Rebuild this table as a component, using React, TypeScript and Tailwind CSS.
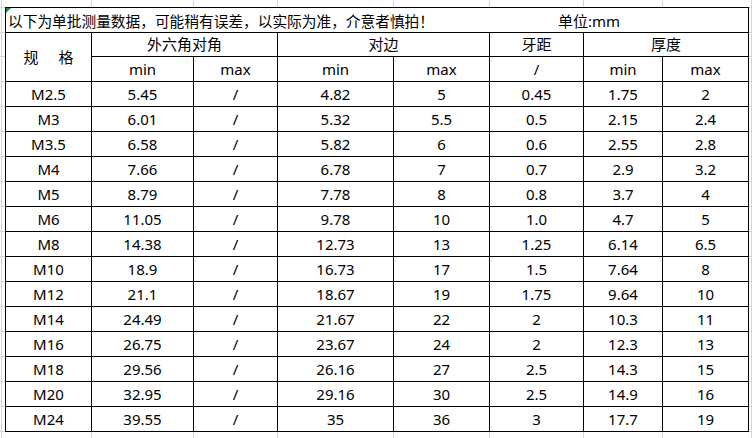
import React from "react";

const rows: string[][] = [
  ["M2.5", "5.45", "/", "4.82", "5", "0.45", "1.75", "2"],
  ["M3", "6.01", "/", "5.32", "5.5", "0.5", "2.15", "2.4"],
  ["M3.5", "6.58", "/", "5.82", "6", "0.6", "2.55", "2.8"],
  ["M4", "7.66", "/", "6.78", "7", "0.7", "2.9", "3.2"],
  ["M5", "8.79", "/", "7.78", "8", "0.8", "3.7", "4"],
  ["M6", "11.05", "/", "9.78", "10", "1.0", "4.7", "5"],
  ["M8", "14.38", "/", "12.73", "13", "1.25", "6.14", "6.5"],
  ["M10", "18.9", "/", "16.73", "17", "1.5", "7.64", "8"],
  ["M12", "21.1", "/", "18.67", "19", "1.75", "9.64", "10"],
  ["M14", "24.49", "/", "21.67", "22", "2", "10.3", "11"],
  ["M16", "26.75", "/", "23.67", "24", "2", "12.3", "13"],
  ["M18", "29.56", "/", "26.16", "27", "2.5", "14.3", "15"],
  ["M20", "32.95", "/", "29.16", "30", "2.5", "14.9", "16"],
  ["M24", "39.55", "/", "35", "36", "3", "17.7", "19"],
];

const colEdges = [1.5, 91.5, 193.5, 277.5, 393.5, 489.5, 583.5, 662.5, 751.5];
const rowEdges = [7.5, 32.5, 56.5, ...Array.from({ length: 15 }, (_, i) => 81.5 + i * 25)];

const Cell = ({ children, className = "" }: { children?: React.ReactNode; className?: string }) => (
  <div className={`flex items-center justify-center border-r border-b border-black ${className}`}>{children}</div>
);

const App = () => {
  return (
    <div
      className="relative w-[752px] h-[438px] overflow-hidden bg-white pl-[5px] pt-[7px] text-[15px] text-black"
      style={{ fontFamily: '"Noto Sans", "Noto Sans CJK SC", sans-serif' }}
    >
      {/* spreadsheet gridlines behind the table */}
      <svg className="absolute inset-0 pointer-events-none" width="752" height="438">
        {colEdges.map((x) => (
          <line key={`v${x}`} x1={x} y1={0} x2={x} y2={438} stroke="#d6d6d6" strokeWidth={1} />
        ))}
        {rowEdges.map((y) => (
          <line key={`h${y}`} x1={0} y1={y} x2={752} y2={y} stroke="#d6d6d6" strokeWidth={1} />
        ))}
      </svg>

      <div className="relative grid w-max grid-cols-[86px_102px_84px_116px_96px_94px_79px_86px] grid-rows-[25px_24px_25px_repeat(14,25px)] border-l border-t border-black bg-white leading-none">
        {/* title row */}
        <div className="relative col-span-8 flex items-center border-r border-b border-black pl-[2px] pt-[2px]">
          <span className="absolute left-0 top-0 h-0 w-0 border-t-[5px] border-r-[5px] border-t-[#1f8a3c] border-r-transparent" />
          <span className="w-[550px] text-[14.7px]">以下为单批测量数据，可能稍有误差，以实际为准，介意者慎拍！</span>
          <span>单位:mm</span>
        </div>

        {/* header rows */}
        <Cell className="row-span-2 gap-5">
          <span>规</span>
          <span>格</span>
        </Cell>
        <Cell className="col-span-2">外六角对角</Cell>
        <Cell className="col-span-2">对边</Cell>
        <Cell>牙距</Cell>
        <Cell className="col-span-2">厚度</Cell>

        <Cell>min</Cell>
        <Cell>max</Cell>
        <Cell>min</Cell>
        <Cell>max</Cell>
        <Cell>/</Cell>
        <Cell>min</Cell>
        <Cell>max</Cell>

        {/* data */}
        {rows.map((r) =>
          r.map((v, i) => <Cell key={`${r[0]}-${i}`}>{v}</Cell>)
        )}
      </div>
    </div>
  );
};

export default App;
